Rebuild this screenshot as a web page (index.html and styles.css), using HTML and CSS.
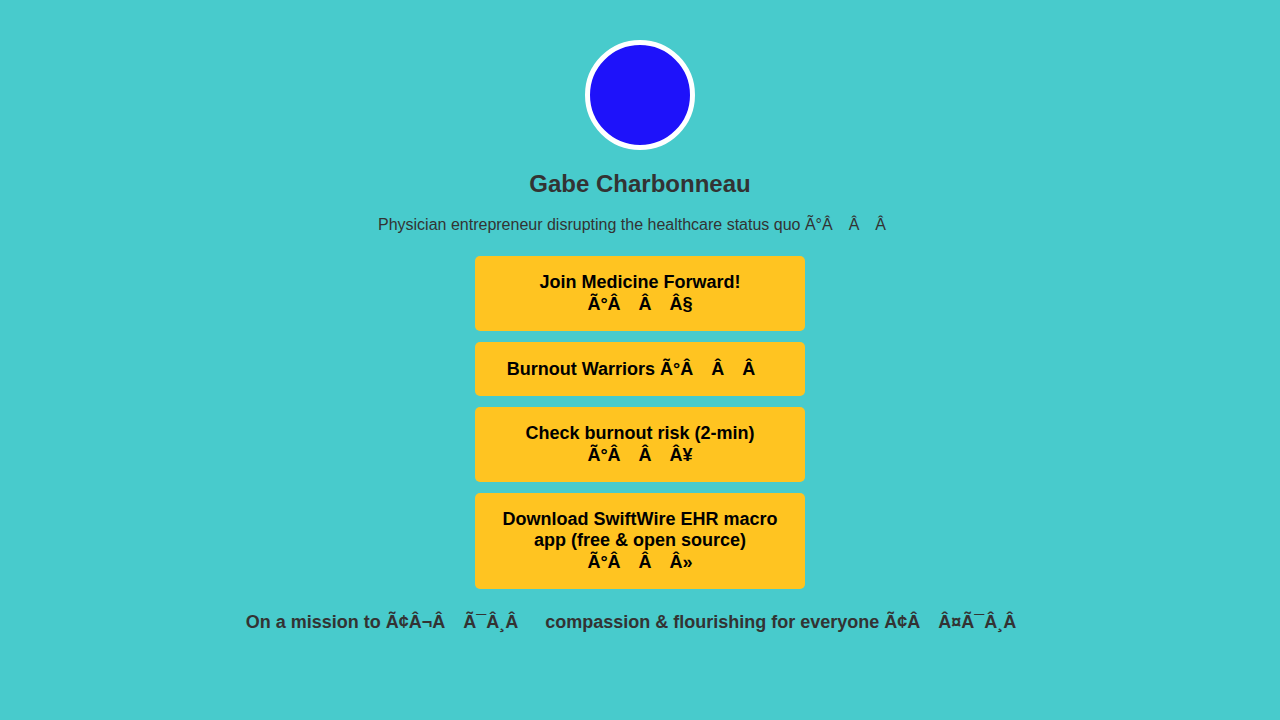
FILE: index.html
```html
<!DOCTYPE html>
<html lang="en">
<head>
<meta charset="utf-8">
<title>Gabe Charbonneau</title>
<link rel="stylesheet" href="styles.css">
</head>
<body>
<main class="profile">
  <div class="avatar"></div>
  <h1 class="name">Gabe Charbonneau</h1>
  <p class="bio">Physician entrepreneur disrupting the healthcare status quo Ã°Â&emsp;Â&emsp;Â&emsp;</p>
  <nav class="links">
    <a class="link" href="#">Join Medicine Forward!<span class="tail">Ã°Â&emsp;Â&emsp;Â§</span></a>
    <a class="link link-single" href="#">Burnout Warriors Ã°Â&emsp;Â&emsp;Â&emsp;</a>
    <a class="link" href="#">Check burnout risk (2-min)<span class="tail">Ã°Â&emsp;Â&emsp;Â¥</span></a>
    <a class="link" href="#">Download SwiftWire EHR macro app (free &amp; open source)<span class="tail">Ã°Â&emsp;Â&emsp;Â»</span></a>
  </nav>
  <p class="mission">On a mission to Ã¢Â¬Â&emsp;Ã¯Â¸Â&emsp;&ensp;compassion &amp; flourishing for everyone Ã¢Â&emsp;Â¤Ã¯Â¸Â&emsp;</p>
</main>
</body>
</html>
```
FILE: styles.css
```css
* { box-sizing: border-box; }
html, body {
  margin: 0;
  padding: 0;
  background: #48cbcc;
  font-family: "Liberation Sans", Arial, sans-serif;
  color: #333333;
}
.profile {
  display: flex;
  flex-direction: column;
  align-items: center;
  padding-top: 40px;
}
.avatar {
  width: 110px;
  height: 110px;
  border-radius: 50%;
  border: 5px solid #ffffff;
  background: #1e12fa;
}
.name {
  margin: 20px 0 0;
  font-size: 24px;
  line-height: 28px;
  font-weight: bold;
}
.bio {
  margin: 17px 0 0;
  font-size: 16px;
  line-height: 20px;
}
.links {
  margin-top: 21px;
  display: flex;
  flex-direction: column;
  gap: 11px;
  width: 330px;
}
.link {
  display: block;
  background: #ffc421;
  border-radius: 5px;
  padding: 15.5px 22px;
  text-align: center;
  color: #000000;
  font-weight: bold;
  font-size: 18px;
  line-height: 21px;
  text-decoration: none;
}
.link-single {
  line-height: 23px;
}
.tail {
  display: block;
  line-height: 23px;
}
.mission {
  margin: 22px 0 0;
  font-size: 18px;
  line-height: 23px;
  font-weight: bold;
}
```
